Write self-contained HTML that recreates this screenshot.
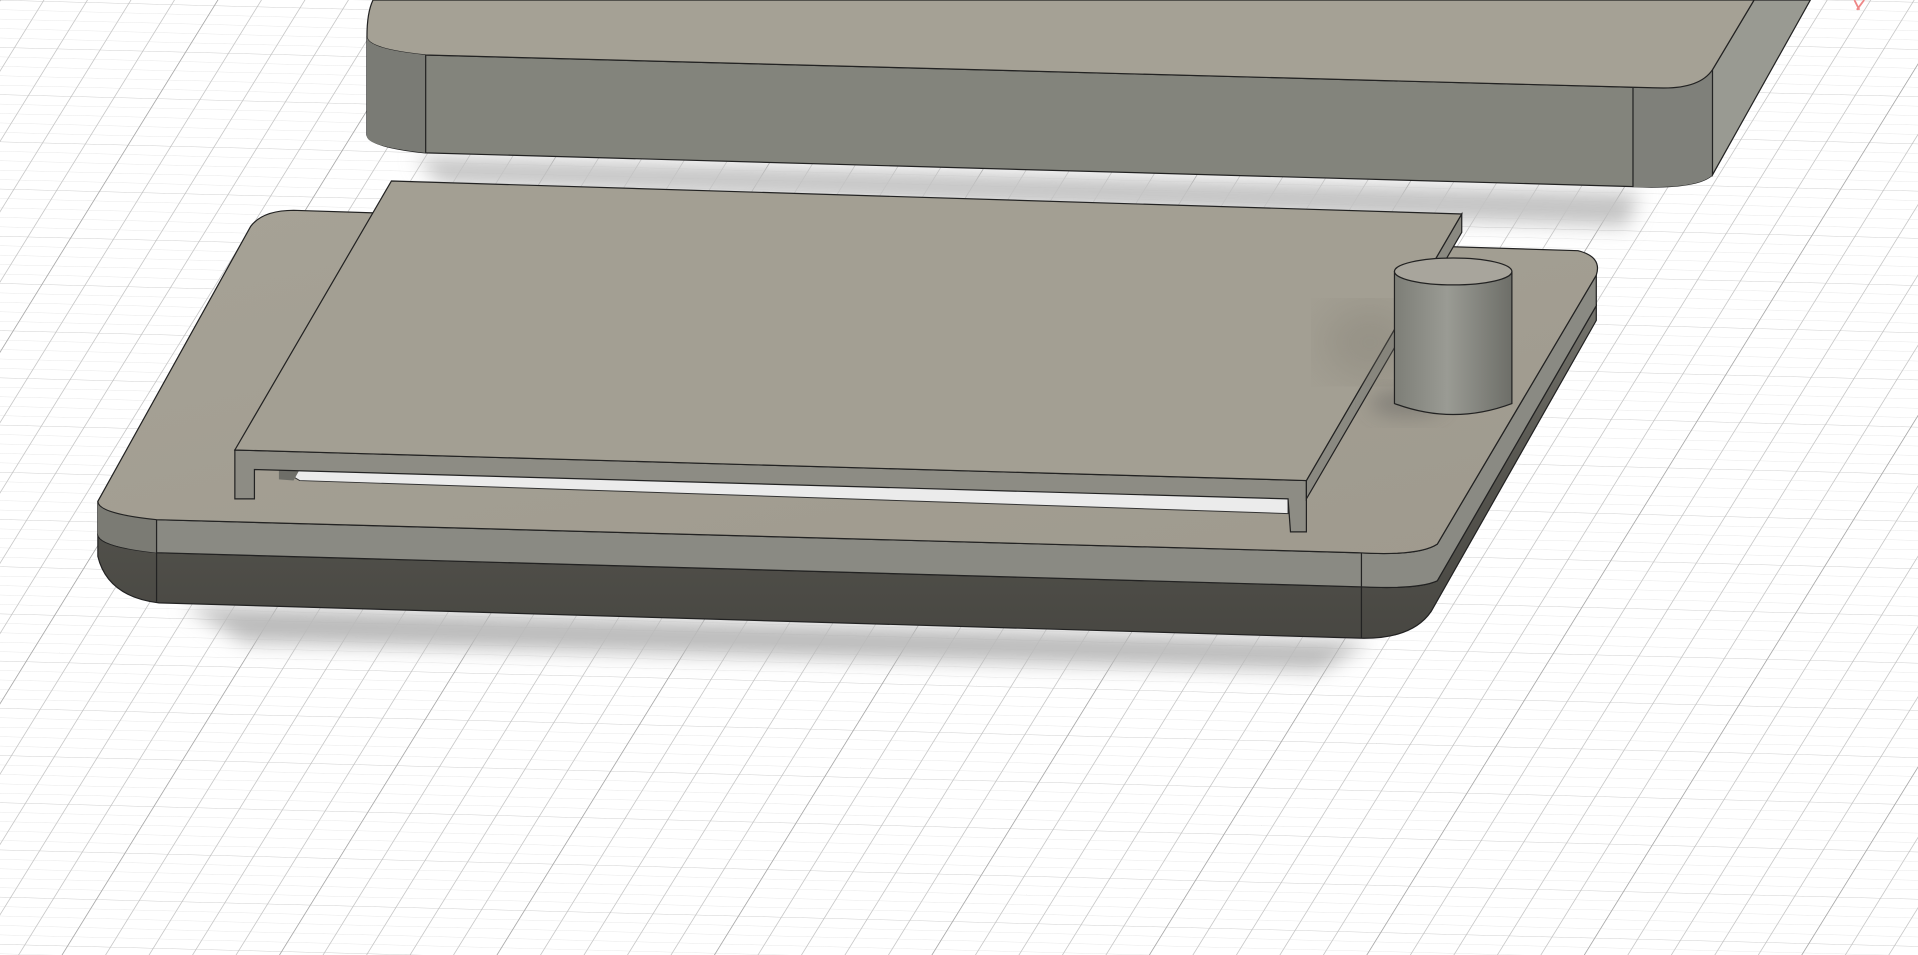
<!DOCTYPE html>
<html><head><meta charset="utf-8"><style>
html,body{margin:0;padding:0;background:#fff;overflow:hidden}
svg{display:block}
</style></head><body>
<svg width="1918" height="955" viewBox="0 0 1568 781" preserveAspectRatio="none" xmlns="http://www.w3.org/2000/svg">
<defs>
<pattern id="g" width="10" height="10" patternUnits="userSpaceOnUse" patternTransform="matrix(3.5 0.09 -0.47 0.76 0 0)">
<path d="M0,0 H10" stroke="#dedede" stroke-width="0.7" fill="none"/>
<path d="M0,0 V10" stroke="#c8c8c8" stroke-width="0.45" fill="none"/>
</pattern>
<pattern id="G" width="50" height="50" patternUnits="userSpaceOnUse" patternTransform="matrix(3.5 0.09 -0.47 0.76 0 0)">
<path d="M0,0 H50" stroke="#b4b4b4" stroke-width="0.35" fill="none"/>
<path d="M0,0 V50" stroke="#a0a0a0" stroke-width="0.3" fill="none"/>
</pattern>
<filter id="b" x="-20%" y="-50%" width="140%" height="200%"><feGaussianBlur stdDeviation="8"/></filter>
<filter id="b2"><feGaussianBlur stdDeviation="18"/></filter>
<linearGradient id="cyl" x1="0" x2="1"><stop offset="0" stop-color="#7d7e77"/><stop offset="0.45" stop-color="#9a9b94"/><stop offset="1" stop-color="#6d6e68"/></linearGradient>
<linearGradient id="bot" x1="0" y1="0" x2="0" y2="1"><stop offset="0" stop-color="#75746d"/><stop offset="0.5" stop-color="#56554f"/><stop offset="1" stop-color="#484742"/></linearGradient>
<linearGradient id="tf" x1="0" y1="0" x2="1" y2="1"><stop offset="0" stop-color="#a6a296"/><stop offset="1" stop-color="#9f9a8e"/></linearGradient>
</defs>
<rect width="1568" height="781" fill="#fff"/>
<rect width="1568" height="781" fill="url(#g)"/>
<rect width="1568" height="781" fill="url(#G)"/>
<path d="M340,128 L1340,158 L1330,185 L360,150 Z" fill="#c2c2c2" filter="url(#b)"/>
<path d="M150,495 L1120,525 L1080,548 L200,525 Z" fill="#bababa" filter="url(#b)"/>
<path d="M300,30 Q300,40 348,45 L1360,72 Q1390,72 1400,57 L1400,143 Q1390,153 1350,153 L348,125 Q300,120 300,110 Z" fill="#83847c" stroke="#222" stroke-width="1"/>
<path d="M1335,72 L1360,72 Q1390,72 1400,57 L1400,143 Q1390,153 1350,153 L1335,153 Z" fill="#7f807a"/>
<path d="M1400,57 L1434,0 L1480,0 L1400,143 Z" fill="#999a92" stroke="#222" stroke-width="1"/>
<path d="M305,0 L1434,0 L1400,57 Q1390,72 1360,72 L348,45 Q300,40 300,30 Q300,10 305,0 Z" fill="#a5a195" stroke="#222" stroke-width="1"/>
<path d="M300,30 L300,112 Q302,120 348,125 L348,45 Q300,40 300,30Z" fill="#7a7b75"/>
<path d="M348,45 V125 M1335,72 V153" stroke="#222" stroke-width="1"/>
<path d="M80,437 L128,452 L1115,480 Q1160,482 1175,475 L1305,250 L1305,262 L1170,500 Q1155,522 1115,522 L130,493 Q88,488 80,455 Z" fill="url(#bot)" stroke="#222" stroke-width="1"/>
<path d="M80,410 Q80,420 128,425 L1110,452 Q1160,455 1175,445 L1305,225 L1305,250 L1175,475 Q1160,482 1115,480 L128,452 Q80,447 80,437 Z" fill="#8a8a83" stroke="#222" stroke-width="1"/>
<path d="M80,410 L80,437 Q82,447 128,452 L128,425 Q82,420 80,410Z" fill="#7b7b74"/>
<path d="M128,425 V492 M1113,452 V522" stroke="#222" stroke-width="1"/>
<path d="M240,172 L1290,205 Q1310,210 1305,225 L1175,445 Q1160,455 1110,452 L128,425 Q80,420 80,410 L205,185 Q215,172 240,172 Z" fill="url(#tf)" stroke="#222" stroke-width="1"/>
<path d="M228,383 L1053,407 L1053,420 L245,393 Z" fill="#ebebeb" stroke="#333" stroke-width="0.8"/>
<path d="M228,383 L245,384 L240,393 L228,392 Z" fill="#6e6e68"/>
<path d="M192,368 L1068,393 L1068,435 L1055,435 L1053,408 L208,384 L208,408 L192,408 Z" fill="#8d8c84" stroke="#222" stroke-width="1"/>
<path d="M1068,393 L1195,175 L1195,190 L1068,408 Z" fill="#8a8981" stroke="#222" stroke-width="1"/>
<path d="M320,148 L1195,175 L1068,393 L192,368 Z" fill="#a39f93" stroke="#222" stroke-width="1"/>
<ellipse cx="1120" cy="280" rx="40" ry="30" fill="#7d786d" opacity="0.35" filter="url(#b2)"/>
<ellipse cx="1150" cy="330" rx="30" ry="10" fill="#555" opacity="0.4" filter="url(#b)"/>
<path d="M1140,222 V330 Q1188,348 1236,330 V222 Z" fill="url(#cyl)" stroke="#222" stroke-width="1"/>
<ellipse cx="1188" cy="222" rx="48" ry="11" fill="#a8a59c" stroke="#222" stroke-width="1"/>
<path d="M1516,0 L1520,8 M1524,0 L1518,8" stroke="#e88" stroke-width="1.5"/>
</svg>
</body></html>
